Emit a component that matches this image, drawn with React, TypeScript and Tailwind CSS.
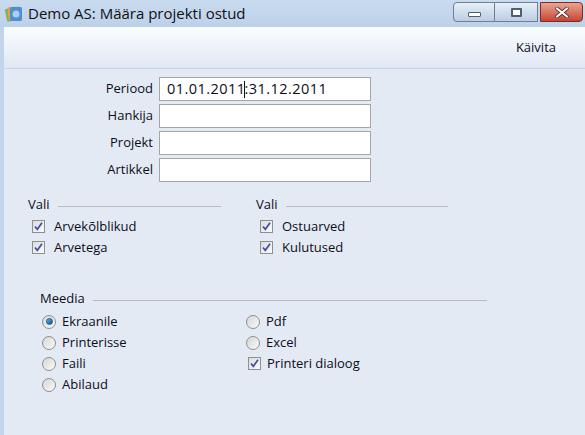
import React from 'react';

const font = { fontFamily: '"Open Sans", "Noto Sans", sans-serif' };

const CheckBox = () => (
  <span className="w-[13px] h-[13px] border border-[#8e8f8f] bg-gradient-to-br from-[#dcdcdc] to-[#fbfbfb] flex items-center justify-center shrink-0">
    <svg width="11" height="11" viewBox="0 0 11 11">
      <path d="M2 5.5 L4.3 8.3 L9 1.8" fill="none" stroke="#3a50a8" strokeWidth="1.7" />
    </svg>
  </span>
);

const Radio = ({ on = false }: { on?: boolean }) => (
  <span className="w-[14px] h-[14px] rounded-full border border-[#8e8f8f] bg-gradient-to-br from-[#d6d6d6] to-[#fafafa] flex items-center justify-center shrink-0">
    {on && <span className="w-[7px] h-[7px] rounded-full bg-gradient-to-br from-[#5fb5ea] to-[#0d4f8a] border border-[#1c5b93]" />}
  </span>
);

const Header = ({ label, lineClass }: { label: string; lineClass: string }) => (
  <div className="flex items-center h-4">
    <span className="text-[13px] leading-4">{label}</span>
    <span className={`h-px bg-[#b8bcc2] ml-[8px] mt-[4px] ${lineClass}`} />
  </div>
);

const CheckRow = ({ label }: { label: string }) => (
  <div className="flex items-center gap-[9px] h-[21px] text-[13px]">
    <CheckBox />
    {label}
  </div>
);

const RadioRow = ({ label, on = false }: { label: string; on?: boolean }) => (
  <div className="flex items-center gap-[6px] h-[21px] text-[13px]">
    <Radio on={on} />
    {label}
  </div>
);

const App = () => {
  const fields = ['Periood', 'Hankija', 'Projekt', 'Artikkel'];

  return (
    <div className="w-[585px] h-[435px] flex flex-col bg-[#c2d5ec] text-[#0d0d1a] overflow-hidden" style={font}>
      {/* title bar */}
      <div className="h-[27px] flex items-center bg-gradient-to-b from-[#c9dbef] to-[#bcd1ea] shrink-0">
        <svg width="18" height="18" viewBox="0 0 18 18" className="ml-[5px]">
          <rect x="1" y="3" width="11" height="13" rx="1.5" fill="#7fb36a" transform="rotate(-12 6 10)" />
          <rect x="3" y="2" width="11" height="13" rx="1.5" fill="#e4a04a" transform="rotate(-5 8 9)" />
          <rect x="5" y="2" width="12" height="14" rx="1.5" fill="#4f8fd0" />
          <circle cx="11" cy="9" r="3.5" fill="#a9d0f2" />
        </svg>
        <span className="ml-[5px] text-[15px] text-[#111]">Demo AS: Määra projekti ostud</span>
        <div className="ml-auto flex items-start self-start mt-[2px] mr-[2px]">
          <div className="w-[42px] h-[20px] border border-[#6e7f95] rounded-l-[4px] bg-gradient-to-b from-[#e7eff8] to-[#bccde2] flex items-center justify-center">
            <span className="w-[13px] h-[5px] border border-[#4e5e73] bg-white rounded-[1px] mt-[5px]" />
          </div>
          <div className="w-[43px] h-[20px] border border-l-0 border-[#6e7f95] bg-gradient-to-b from-[#e7eff8] to-[#bccde2] flex items-center justify-center">
            <span className="w-[11px] h-[9px] border-2 border-[#4e5e73] bg-white rounded-[1px]" />
          </div>
          <div className="w-[43px] h-[20px] border border-[#7e2a22] rounded-r-[4px] ml-[2px] bg-gradient-to-b from-[#e8a493] to-[#c5432f] flex items-center justify-center">
            <svg width="14" height="11" viewBox="0 0 14 11">
              <path d="M2 1.5 L12 9.5 M12 1.5 L2 9.5" stroke="#5a2a24" strokeWidth="3.6" strokeLinecap="round" />
              <path d="M2 1.5 L12 9.5 M12 1.5 L2 9.5" stroke="#ffffff" strokeWidth="2.2" strokeLinecap="round" />
            </svg>
          </div>
        </div>
      </div>

      {/* toolbar */}
      <div className="h-[42px] shrink-0 ml-[4px] bg-gradient-to-b from-[#fbfdff] to-[#dfe8f4] border-b border-[#c5d3e4] flex items-center justify-end pr-[29px]">
        <span className="text-[13px]">Käivita</span>
      </div>

      {/* body */}
      <div className="flex-1 ml-[4px] bg-[#e3eaf3] pt-[8px]">
        <div className="flex flex-col gap-[3px]">
          {fields.map((f, i) => (
            <div key={f} className="flex items-center gap-[6px]">
              <span className="w-[149px] text-right text-[13px]">{f}</span>
              <div className="w-[212px] h-[24px] border border-[#a4a6aa] bg-white flex items-center px-[7px] text-[14.5px] tracking-[0.45px]">
                {i === 0 && (
                  <>
                    <span>01.01.2011</span>
                    <span className="w-px h-[17px] bg-[#111] -mx-[1px]" />
                    <span>:31.12.2011</span>
                  </>
                )}
              </div>
            </div>
          ))}
        </div>

        {/* Vali */}
        <div className="flex mt-[14px]">
          <div className="w-[252px] pl-[24px]">
            <Header label="Vali" lineClass="w-[163px]" />
            <div className="pt-[4px] pl-[4px]">
              <CheckRow label="Arvekõlblikud" />
              <CheckRow label="Arvetega" />
            </div>
          </div>
          <div>
            <Header label="Vali" lineClass="w-[162px]" />
            <div className="pt-[4px] pl-[4px]">
              <CheckRow label="Ostuarved" />
              <CheckRow label="Kulutused" />
            </div>
          </div>
        </div>

        {/* Meedia */}
        <div className="mt-[32px] pl-[36px]">
          <Header label="Meedia" lineClass="w-[394px]" />
          <div className="flex pt-[5px] pl-[2px]">
            <div className="w-[204px]">
              <RadioRow label="Ekraanile" on />
              <RadioRow label="Printerisse" />
              <RadioRow label="Faili" />
              <RadioRow label="Abilaud" />
            </div>
            <div>
              <RadioRow label="Pdf" />
              <RadioRow label="Excel" />
              <div className="pl-[2px]">
                <div className="flex items-center gap-[6px] h-[21px] text-[13px]">
                  <CheckBox />
                  Printeri dialoog
                </div>
              </div>
            </div>
          </div>
        </div>
      </div>
    </div>
  );
};

export default App;
